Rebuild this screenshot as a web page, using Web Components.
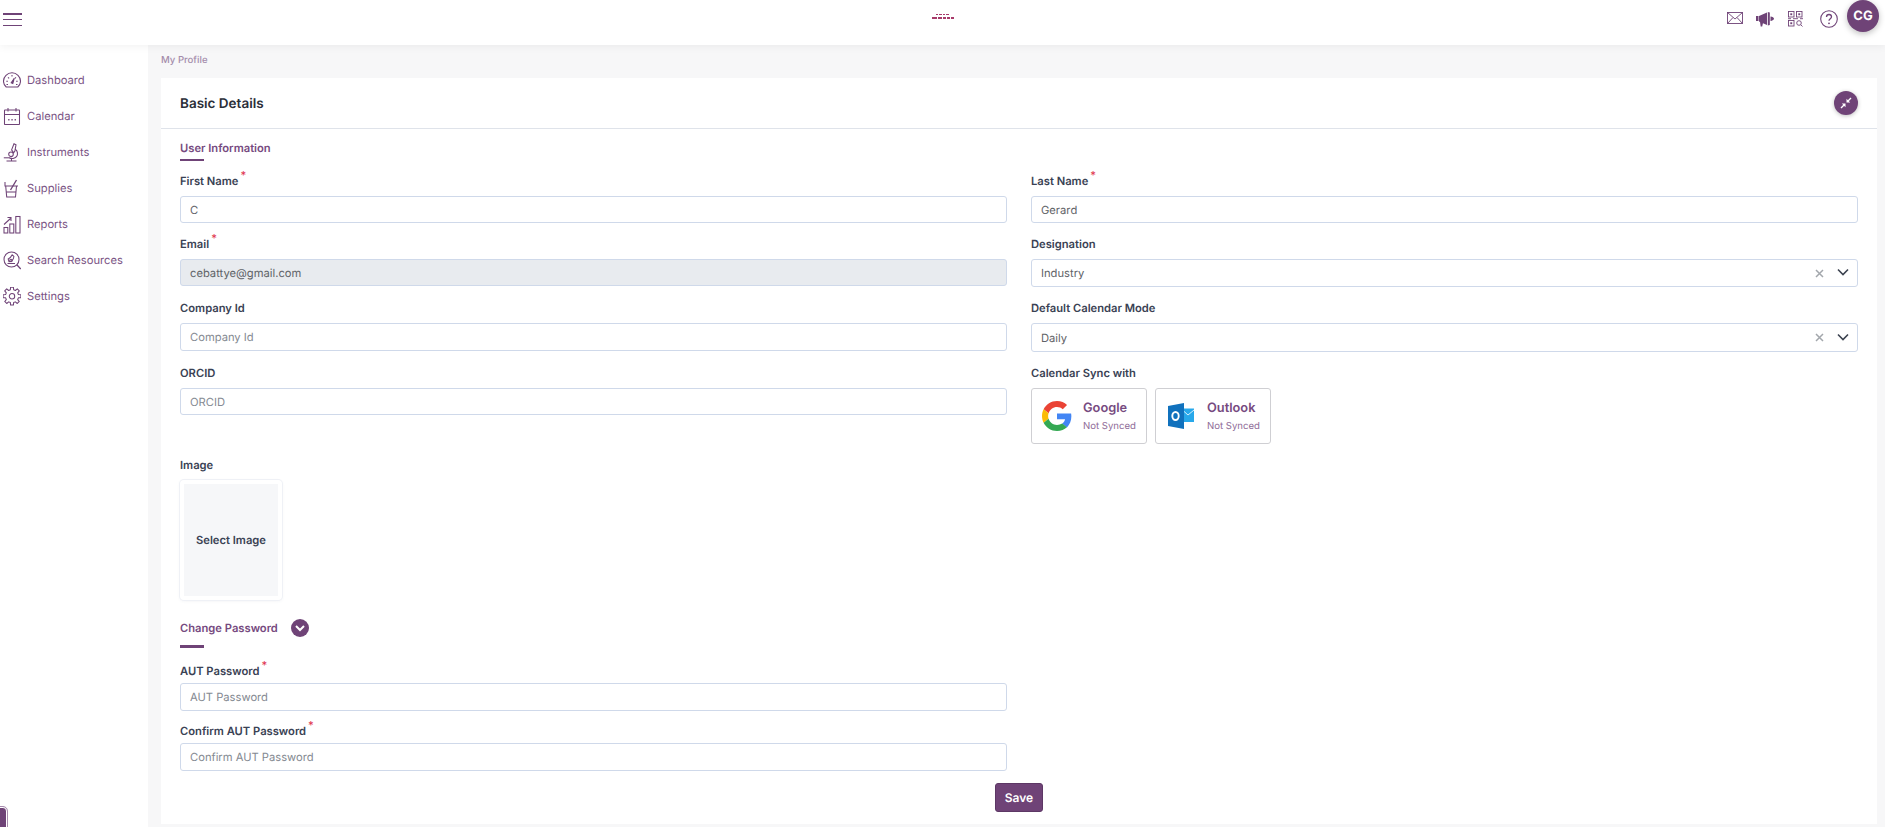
<!DOCTYPE html>
<html lang="en"><head><meta charset="utf-8"><title>My Profile</title>
<style>
html,body{margin:0;height:100%;}
body{font-family:Inter,"Noto Sans",sans-serif;overflow:hidden;background:#fff;text-rendering:geometricPrecision;}
</style></head><body>
<app-shell>
  <app-header slot="header"></app-header>
  <side-nav slot="nav">
    <nav-item icon="dash">Dashboard</nav-item>
    <nav-item icon="cal">Calendar</nav-item>
    <nav-item icon="micro">Instruments</nav-item>
    <nav-item icon="mortar">Supplies</nav-item>
    <nav-item icon="chart">Reports</nav-item>
    <nav-item icon="search">Search Resources</nav-item>
    <nav-item icon="gear">Settings</nav-item>
  </side-nav>
  <profile-page></profile-page>
</app-shell>
<script>
const P='#6f4377';
function gearPath(cx,cy,ro,ri,n){
  let d='';
  for(let k=0;k<n;k++){
    const s=2*Math.PI/n, a=k*s-Math.PI/2;
    const pts=[[ri,a-s*.32],[ro,a-s*.2],[ro,a+s*.2],[ri,a+s*.32]];
    pts.forEach((p,j)=>{
      const x=(cx+p[0]*Math.cos(p[1])).toFixed(2), y=(cy+p[0]*Math.sin(p[1])).toFixed(2);
      d+=(k===0&&j===0?'M':'L')+x+' '+y;
    });
  }
  return d+'z';
}
const ICONS={
 dash:`<path d="M3.2 16h11.6c1.6-1.4 2.7-3.4 2.7-5.7A8.5 8.5 0 0 0 .5 10.3C.5 12.6 1.6 14.6 3.2 16z"/><path d="M9 4v1.6M3.3 10.3h1.6M13.1 10.3h1.6M5 6.3l1.1 1.1M13 6.3l-1.1 1.1M3.5 13.5h1.5M13 13.500h1.500"/><path d="M8.2 11.8 11.3 7.2 9.8 12.5z" fill="${P}"/>`,
 cal:`<rect x="1.5" y="3" width="15" height="14.5" rx=".5"/><path d="M1.5 7.5h15M5 1v3.5M13 1v3.5"/><path d="M5.2 12.8h1.3M8.4 12.8h1.3M11.6 12.8h1.3" stroke-width="1.6"/>`,
 micro:`<path d="M3.5 18h10M8.5 18v-2.4"/><path d="M12.2 6.2c2.4 1.600 3.1 5.2 1.3 7.5-1.7 2-5 2.4-7.100 1.100"/><path d="M8.6 6.9 11 .8l2 .9-1.100 6.3-1.3 1.9z"/><circle cx="8" cy="11.3" r="2.3"/><path d="M.8 14.8h6"/>`,
 mortar:`<path d="M1.5 7h13.500M2 3v4M2.700 7l1 11h8.800l1-11"/><path d="M3.200 13h9.800"/><path d="M7.500 11 13.500 1" stroke-width="1.400"/>`,
 chart:`<rect x="6.8" y="9" width="4" height="9"/><rect x="12.8" y="1.5" width="4.2" height="16.5"/><rect x="1" y="12.5" width="3.8" height="5.5"/><path d="M1 9.5 7.5 3.500M4.500 2.500h3.500v3.500"/>`,
 search:`<circle cx="8.5" cy="8.5" r="7.500"/><path d="M13.800 13.800l4 4.200" stroke-width="1.300"/><path d="M4.500 12.500h7.500M6 10.800c2.500-.3 4.500-2.300 4.900-5.300L9.200 3.800C8.300 5.800 7 7 5.200 8z"/><circle cx="8" cy="9.500" r="1.300"/>`,
 gear:`<path d="${gearPath(9,9.2,9,6.6,8)}" stroke-linejoin="round"/><circle cx="9" cy="9.2" r="2.7"/>`
};
function def(name,css,html){
  customElements.define(name,class extends HTMLElement{
    connectedCallback(){
      if(this.shadowRoot)return;
      const r=this.attachShadow({mode:'open'});
      const a=n=>this.getAttribute(n);
      r.innerHTML=`<style>${css}</style>`+(typeof html==='function'?html(a,this):html);
    }
  });
}
def('app-shell',`:host{display:grid;grid-template-columns:148px 1fr;grid-template-rows:45px 782px;height:827px;overflow:hidden;position:relative}
 .h{grid-column:1/3;position:relative;z-index:2}
 .m{background:#f7f7f8;min-width:0}
 .tab{position:absolute;left:-14px;bottom:-6px;width:21px;height:26px;box-sizing:border-box;background:${P};border:1px solid #fff;outline:1px solid #a78bae;border-radius:4px}`,
 `<div class="h"><slot name="header"></slot></div><slot name="nav"></slot><div class="m"><slot></slot></div><div class="tab"></div>`);
def('app-header',`:host{display:flex;align-items:flex-start;height:45px;background:#fff;box-shadow:0 2px 8px rgba(0,0,0,.05);position:relative}
 .burger{width:19px;height:13px;margin:13px 0 0 3px;display:flex;flex-direction:column;justify-content:space-between}
 .burger i{display:block;height:1.5px;background:${P}}
 .logo{position:absolute;left:931px;top:14px}
 .icons{margin-left:auto;display:flex;align-items:flex-start;padding-right:6px}
 svg{display:block;fill:none;stroke:${P}}
 .av{width:32px;height:32px;border-radius:50%;background:${P};color:#fff;font:700 13px/32px Inter,sans-serif;text-align:center;box-shadow:0 2px 6px rgba(0,0,0,.25);margin-left:9px}`,
 `<div class="burger"><i></i><i></i><i></i></div>
 <svg class="logo" width="24" height="8" viewBox="0 0 24 8" aria-hidden="true" style="stroke:none"><path fill="#a83a6a" d="M5 0h2v1H5zM8 0h3v1H8zM12 0h2v1h-2zM15 0h3v1h-3zM1 3h5v2H1zM7 3h4v2H7zM12 3h3v2h-3zM16 3h3v2h-3zM20 3h3v2h-3z"/></svg>
 <div class="icons">
  <svg style="margin-top:12px" width="16" height="12" viewBox="0 0 16 12"><rect x=".5" y=".5" width="15" height="11" stroke-width=".9"/><path d="M.5.5 8 7l7.5-6.5M.5 11.5 6 5.5M15.5 11.5 10 5.5" stroke-width=".9"/></svg>
  <svg style="margin:12px 0 0 13px" width="18" height="15" viewBox="0 0 18 15"><path fill="${P}" stroke="none" d="M0 4h2.500v5H0zM3 4l8-3.500v12.500L3 9.500zM4 10l3 1-.8 3.500H4.700zM11.800 0l2 .6v12.300l-2 .6zM14.500 4.500c2 .2 3.500 1.300 3.500 2.200s-1.500 2-3.500 2.200z"/></svg>
  <svg style="margin:11px 0 0 14px" width="15" height="16" viewBox="0 0 15 16" stroke-width=".9"><rect x=".5" y=".5" width="5.5" height="5.5"/><rect x="2.3" y="2.3" width="1.9" height="1.9" fill="${P}" stroke="none"/><rect x="8.5" y=".5" width="5.5" height="5.5"/><rect x="10.3" y="2.3" width="1.9" height="1.9" fill="${P}" stroke="none"/><rect x=".5" y="9.5" width="5.5" height="5.5"/><rect x="2.3" y="11.3" width="1.9" height="1.9" fill="${P}" stroke="none"/><circle cx="11" cy="12" r="2.3"/><path d="M12.800 13.800 14.500 15.500M0 7.700h3M5 7.700h5M12 7.700h3"/></svg>
  <svg style="margin:10px 0 0 17px" width="18" height="18" viewBox="0 0 18 18"><circle cx="9" cy="9" r="8.3" stroke-width="1.1"/><path d="M6.500 7c0-1.500 1.100-2.500 2.500-2.500s2.500 1 2.500 2.300c0 1.800-2.500 2-2.500 4" stroke-width="1.3"/><circle cx="9" cy="13.3" r=".9" fill="${P}" stroke="none"/></svg>
  <div class="av">CG</div>
 </div>`);
def('side-nav',`:host{display:flex;flex-direction:column;padding-top:17px;background:#fff;box-sizing:border-box}`,`<slot></slot>`);
def('nav-item',`:host{display:flex;align-items:center;height:36px;padding-left:3px;gap:6px;font-size:11.2px;color:#7a5384;white-space:nowrap}
 svg{width:18px;height:19px;fill:none;stroke:${P};stroke-width:1.05;flex:none}`,
 (a)=>`<svg viewBox="0 0 18 19" aria-hidden="true">${ICONS[a('icon')]}</svg><span><slot></slot></span>`);
def('section-title',`:host{display:block;font-size:11.2px;font-weight:600;color:#764a80;line-height:16px}
 .b{width:24px;height:var(--bar,2px);background:${P};margin-top:var(--gap,4px)}
 .r{display:flex;align-items:center;gap:13px}`,
 `<div class="r"><slot></slot><slot name="after"></slot></div><div class="b"></div>`);
const fieldCss=`:host{display:block;min-width:0;font-size:11.2px}
 label{display:block;height:16px;line-height:16px;margin-bottom:var(--lm,7px);font-weight:600;color:#3a4254;white-space:nowrap}
 sup{color:#e0364f;font-size:11px;line-height:0;margin-left:2px;position:relative;top:-1px;font-weight:500}
 .i{box-sizing:border-box;height:var(--ih,27px);border:1px solid #cfd9ea;border-radius:3px;background:#fff;padding:1px 9px 0;color:#5f6368;display:flex;align-items:center;font-weight:400}
 .i.ph{color:#858a92;padding-top:0}
 .i.sel{padding-top:0}
 .i.dis{background:#e8ebef;color:#5f6368}`;
def('form-field',fieldCss,(a,el)=>{
 const v=a('value'),ph=a('placeholder');
 return `<label>${a('label')}${el.hasAttribute('required')?'<sup>*</sup>':''}</label><div class="i ${v?'':'ph'} ${el.hasAttribute('disabled')?'dis':''}" style="${a('h')?'height:'+a('h')+'px':''}">${v||ph}</div>`;
});
def('select-field',fieldCss+`.x{margin-left:auto;width:9px;height:9px;stroke:#a3a7ac;stroke-width:1.5;fill:none;display:block}
 .c{margin-left:13px;margin-right:-1px;width:12px;height:8px;stroke:#3c4350;stroke-width:1.6;fill:none;display:block;margin-top:-2px}`,
 (a)=>`<label>${a('label')}</label><div class="i sel" style="height:${a('h')||28}px"><span>${a('value')}</span><svg class="x" viewBox="0 0 9 9"><path d="M1 1l7 7M8 1 1 8"/></svg><svg class="c" viewBox="0 0 12 8"><path d="M1 1.5 6 6.5 11 1.5"/></svg></div>`);
def('sync-button',`:host{display:flex;align-items:center;box-sizing:border-box;width:116px;height:56px;border:1px solid #cfcfd3;border-radius:3px;background:#fff;color:#764a80}
 .ic{width:54px;display:flex;justify-content:center;flex:none;margin-left:-2px;margin-right:-1px}
 b{display:block;font-size:12.8px;font-weight:600;line-height:16px;margin-top:1px}
 span{display:block;font-size:9.6px;line-height:12px;margin-top:4px;color:#8f6c98;white-space:nowrap}`,
 (a)=>`<div class="ic"><slot></slot></div><div><b>${a('name')}</b><span>Not Synced</span></div>`);
def('image-picker',`:host{display:block;box-sizing:border-box;width:102px;height:120px;padding:4px;border-radius:4px;background:#fff;box-shadow:0 0 0 1px #eff1f6,0 1px 3px rgba(120,130,160,.12)}
 div{height:100%;background:#f6f7f9;display:flex;align-items:center;justify-content:center;font-size:11.2px;font-weight:600;color:#3a4254}`,`<div>Select Image</div>`);
def('profile-page',`:host{display:block;height:100%;box-sizing:border-box;padding:0 8px 3px 13px;position:relative}
 .crumb{height:33px;line-height:32px;font-size:9.6px;font-weight:500;color:#a48cab}
 .card{background:#fff;height:746px;display:flex;flex-direction:column}
 .head{height:51px;box-sizing:border-box;border-bottom:1px solid #dfe3ea;display:flex;align-items:center;justify-content:space-between;padding:0 19px;font-size:13.5px;font-weight:600;color:#2a2e38;flex:none}
 .head span{padding-top:1px}
 .col{width:24px;height:24px;border-radius:50%;background:${P};box-shadow:0 1px 4px rgba(0,0,0,.25);display:flex;align-items:center;justify-content:center}
 .body{padding:11px 19px 0;flex:1;display:flex;flex-direction:column}
 section-title.a{margin-bottom:12px;--gap:3px}
 .grid{display:grid;grid-template-columns:1fr 1fr;column-gap:24px;grid-template-rows:63px 64px 65px 92px}
 .imgl{font-size:11.2px;font-weight:600;color:#3a4254;line-height:16px;margin-bottom:7px}
 .two{margin-top:19px;--gap:8px;--bar:3px}
 .pw{width:calc(50% - 12px);display:flex;flex-direction:column;margin-top:15px;--lm:4px;--ih:28px}
 .pw form-field+form-field{margin-top:12px}
 .save{align-self:center;margin-top:12px;width:48px;height:29px;box-sizing:border-box;background:${P};color:#fff;border-radius:3px;font-size:12px;font-weight:600;display:flex;align-items:center;justify-content:center;border:1px solid #5d3765}
 .syncs{display:flex;gap:8px}
 svg{display:block}
 .chev{width:18px;height:18px;border-radius:50%;background:${P};display:flex;align-items:center;justify-content:center}`,
 `<div class="crumb">My Profile</div>
 <div class="card">
  <div class="head"><span>Basic Details</span><div class="col"><svg width="12" height="12" viewBox="0 0 12 12" fill="none" stroke="#fff" stroke-width="1.4"><path d="M11 1 7.5 4.5M1 11l3.5-3.5"/><path fill="#fff" stroke="none" d="M6.5 1.8v3.7h3.7zM5.5 10.2V6.5H1.8z"/></svg></div></div>
  <div class="body">
   <section-title class="a">User Information</section-title>
   <div class="grid">
    <form-field label="First Name" required value="C"></form-field>
    <form-field label="Last Name" required value="Gerard"></form-field>
    <form-field label="Email" required disabled value="cebattye@gmail.com"></form-field>
    <select-field label="Designation" value="Industry"></select-field>
    <form-field label="Company Id" placeholder="Company Id" h="28"></form-field>
    <select-field label="Default Calendar Mode" value="Daily" h="29"></select-field>
    <form-field label="ORCID" placeholder="ORCID"></form-field>
    <div>
     <div class="imgl">Calendar Sync with</div>
     <div class="syncs">
      <sync-button name="Google"><svg width="30" height="30" viewBox="0 0 48 48"><path fill="#EA4335" d="M24 9.5c3.54 0 6.71 1.22 9.21 3.6l6.85-6.85C35.9 2.38 30.47 0 24 0 14.62 0 6.51 5.38 2.56 13.22l7.98 6.19C12.43 13.72 17.74 9.5 24 9.5z"/><path fill="#4285F4" d="M46.98 24.55c0-1.57-.15-3.09-.38-4.55H24v9.02h12.94c-.58 2.96-2.26 5.48-4.78 7.18l7.73 6c4.51-4.18 7.09-10.36 7.09-17.65z"/><path fill="#FBBC05" d="M10.53 28.59c-.48-1.45-.76-2.99-.76-4.59s.27-3.14.76-4.59l-7.98-6.19C.92 16.46 0 20.12 0 24c0 3.88.92 7.54 2.56 10.78l7.97-6.19z"/><path fill="#34A853" d="M24 48c6.48 0 11.93-2.13 15.89-5.81l-7.73-6c-2.15 1.45-4.92 2.3-8.16 2.3-6.26 0-11.57-4.22-13.47-9.91l-7.98 6.19C6.51 42.62 14.62 48 24 48z"/></svg></sync-button>
      <sync-button name="Outlook"><svg width="26" height="26" viewBox="0 0 26 26"><path fill="#28a8ea" d="M14 5.5h12v13.5H14z"/><path fill="none" stroke="#d9f0fb" stroke-width="1" d="M15 7.500l5 4.500 6-5"/><path fill="#1071bd" d="M0 3 16 0v26L0 23z"/><ellipse cx="7.500" cy="13" rx="3.200" ry="4" fill="none" stroke="#fff" stroke-width="1.900"/></svg></sync-button>
     </div>
    </div>
   </div>
   <div class="imgl">Image</div>
   <image-picker></image-picker>
   <section-title class="two">Change Password<div class="chev" slot="after"><svg width="10" height="7" viewBox="0 0 10 7" fill="none" stroke="#fff" stroke-width="2"><path d="M1 1l4 4 4-4"/></svg></div></section-title>
   <div class="pw">
    <form-field label="AUT Password" required placeholder="AUT Password"></form-field>
    <form-field label="Confirm AUT Password" required placeholder="Confirm AUT Password"></form-field>
   </div>
   <div class="save">Save</div>
  </div>
 </div>`);
</script>
</body></html>
